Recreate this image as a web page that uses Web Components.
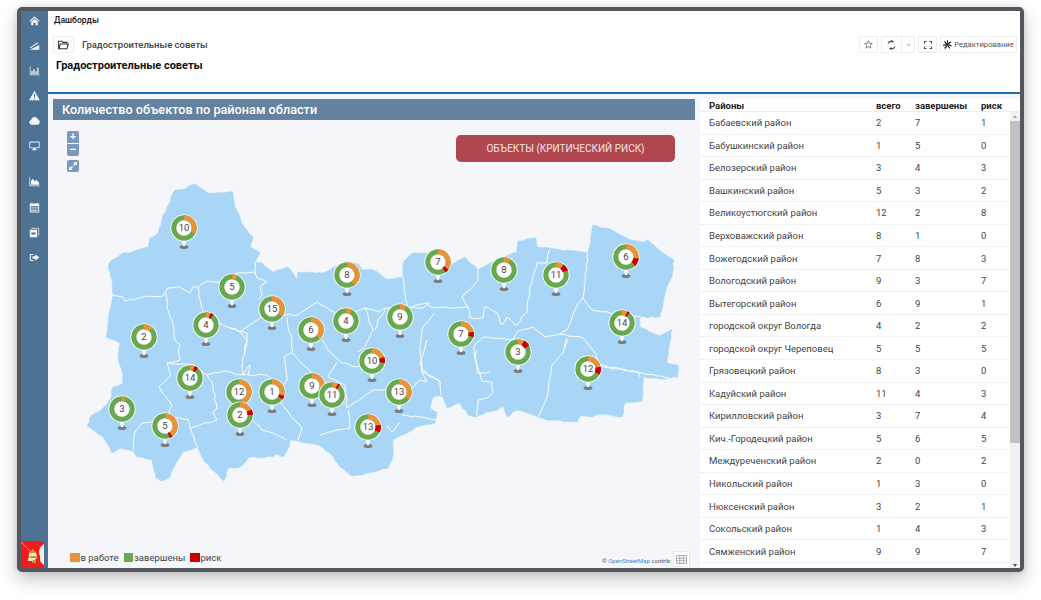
<!DOCTYPE html>
<html lang="ru">
<head>
<meta charset="utf-8">
<title>Дашборды</title>
<style>
  html, body { margin: 0; background: #fff; height: 100%; overflow: hidden; }
  body { font-family: Roboto, "Liberation Sans", sans-serif; }
</style>
</head>
<body>
<dash-app>
  <side-bar slot="side"></side-bar>
  <dash-header slot="head" crumb="Дашборды" name="Градостроительные советы"></dash-header>
  <map-panel slot="map" heading="Количество объектов по районам области"></map-panel>
  <district-table slot="table"></district-table>
</dash-app>

<script>
// Frame of the whole screenshot
class DashApp extends HTMLElement {
  constructor() {
    super();
    this.attachShadow( {mode: 'open'} ).innerHTML = `
      <style>
        :host {
          box-sizing: border-box;
          display: flex;
          width: 1007px;
          height: 565px;
          margin: 7px 0 0 17px;
          border: 4px solid #54585e;
          border-radius: 5px;
          overflow: hidden;
          background: #fff;
          box-shadow: 0 8px 18px rgba( 0, 0, 0, 0.22 ), 0 0 6px rgba( 0, 0, 0, 0.12 );
        }
        .main { flex: 1; display: flex; flex-direction: column; min-width: 0; }
        .content {
          flex: 1;
          display: flex;
          gap: 5px;
          padding: 5px 0 0 5px;
          background: #f4f6f9;
          min-height: 0;
        }
      </style>
      <slot name="side"></slot>
      <div class="main">
        <slot name="head"></slot>
        <div class="content">
          <slot name="map"></slot>
          <slot name="table"></slot>
        </div>
      </div>`;
  }
}

// 14x14 icons for the sidebar
const SIDE_ICONS = [
  '<path d="M7 1.5 13.5 7.5 12.4 8.6 7 3.6 1.6 8.6.5 7.5ZM2.8 8.6 7 4.8 11.2 8.6V13H8.4V9.8H5.6V13H2.8Z"/>',
  '<path d="M1 12.5 13 6.5V12.5ZM1 9.5 11 3 11.7 4 1.7 10.5Z"/>',
  '<path d="M1 1.5H1.9V12.1H13.5V13H1ZM3 7.5H4.6V11.4H3ZM5.5 5H7.1V11.4H5.5ZM8 8H9.6V11.4H8ZM10.5 3.5H12.1V11.4H10.5Z"/>',
  '<path fill-rule="evenodd" d="M7 .8 13.8 13H.2ZM6.2 4.8 6.4 9.6H7.6L7.8 4.8ZM6.2 10.4V11.9H7.8V10.4Z"/>',
  '<path d="M3.6 12.3C1.8 12.3.4 11 .4 9.3.4 7.8 1.5 6.7 2.8 6.4 3.1 4.2 5 2.6 7.2 2.6 9.2 2.6 10.8 3.9 11.3 5.7 12.8 6 13.7 7.4 13.7 8.9 13.7 10.8 12.3 12.3 10.4 12.3Z"/>',
  '<path fill-rule="evenodd" d="M.5 2H13.5V10.5H8.6V12H10.2V13H3.8V12H5.4V10.5H.5ZM1.6 3.1V9.4H12.4V3.1Z"/>',
  '',
  '<path d="M.5 1.5H1.5V12H13.5V13H.5ZM2.4 11V6.6L4.8 3.6 7.2 6.8 9.2 4.8 12.8 8.4V11Z"/>',
  '<path fill-rule="evenodd" d="M3 .8H4.4V2H9.6V.8H11V2H13V13.3H1V2H3ZM2.1 5V12.2H11.9V5ZM3 6H4.6V7.4H3ZM5.4 6H7V7.4H5.4ZM7.8 6H9.4V7.4H7.8ZM10.2 6H11.2V7.4H10.2ZM3 8.2H4.6V9.6H3ZM5.4 8.2H7V9.6H5.4ZM7.8 8.2H9.4V9.6H7.8ZM10.2 8.2H11.2V9.6H10.2ZM3 10.3H4.6V11.5H3ZM5.4 10.3H7V11.5H5.4ZM7.8 10.3H9.4V11.5H7.8Z"/>',
  '<path fill-rule="evenodd" d="M1 3.6H10.4V13H1ZM3 7V9.4H8.4V7Z"/><path d="M3.2 1H13V10.8H11.6V2.4H3.2Z" opacity=".6"/>',
  '<path d="M5.5 2.5H2.8C1.8 2.5 1 3.3 1 4.3V9.7C1 10.7 1.8 11.5 2.8 11.5H5.5V10.2H3.2C2.7 10.2 2.3 9.8 2.3 9.3V4.7C2.3 4.2 2.7 3.8 3.2 3.8H5.5ZM4.5 5.5H8V3L13.3 7 8 11V8.5H4.5Z"/>'
];

class SideBar extends HTMLElement {
  constructor() {
    super();
    const icons = SIDE_ICONS.map( ( d ) => {
      return d === '' ? '<i></i>' : `<svg viewBox="0 0 14 14">${d}</svg>`;
    } ).join( '' );

    this.attachShadow( {mode: 'open'} ).innerHTML = `
      <style>
        :host {
          box-sizing: border-box;
          display: flex;
          flex-direction: column;
          align-items: center;
          flex: 0 0 27px;
          background: #4e7294;
          padding-top: 3.5px;
        }
        svg {
          display: block;
          width: 11px;
          height: 11px;
          margin: 0 0 14.2px 0;
          fill: #f2f5f8;
          flex: none;
        }
        i { display: block; height: 10.8px; flex: none; }
        .crest { margin-top: auto; align-self: flex-start; width: 23px; height: 27px; flex: none; }
        .crest svg { width: 23px; height: 27px; margin: 0; }
      </style>
      ${icons}
      <div class="crest">
        <svg viewBox="0 0 23 27">
          <rect width="23" height="27" fill="#f01d1d"/>
          <path d="M23 3C18 6 17 11 19 15 20 18 17 20 23 24Z" fill="#f4f1e6"/>
          <path d="M0 1 11 12" stroke="#b9b4a4" stroke-width="1" fill="none"/>
          <path d="M8 13C8 9 14 9 15 12 17 15 16 19 13 19 10 20 7 18 8 13Z" fill="#f1e9cf"/>
          <path d="M10.5 8H12.5V10H14V12H9V10H10.5ZM9 15H16V17H9ZM11 19H15V22H11Z" fill="#c29a2b"/>
          <path d="M7 17H12V20H7Z" fill="#e9e3cc"/>
        </svg>
      </div>`;
  }
}

// Breadcrumb, toolbar and the title of the dashboard
class DashHeader extends HTMLElement {
  constructor() {
    super();
    const crumb = this.getAttribute( 'crumb' );
    const name = this.getAttribute( 'name' );

    this.attachShadow( {mode: 'open'} ).innerHTML = `
      <style>
        :host {
          box-sizing: border-box;
          display: block;
          flex: none;
          height: 83px;
          background: #fff;
          border-bottom: 2px solid #1b70b0;
          padding: 3.5px 3px 0 5px;
          font-family: Roboto, "Liberation Sans", sans-serif;
        }
        .crumb { font-size: 8.6px; font-weight: 500; line-height: 11px; color: #111; padding-left: 1px; }
        .bar { display: flex; align-items: center; height: 17px; margin-top: 10.5px; }
        .btn {
          box-sizing: border-box;
          display: flex;
          align-items: center;
          justify-content: center;
          height: 17px;
          border: 1px solid #eceef0;
          background: #fff;
          color: #444;
        }
        .folder { width: 21px; margin-right: 8px; }
        .name { font-size: 9.5px; font-weight: 500; color: #444; flex: 1; }
        .tools { display: flex; align-items: center; }
        svg { display: block; }
        .title { font-size: 11px; font-weight: 700; color: #111; margin: 6px 0 0 3px; line-height: 14px; }
        .edit { width: 77px; margin-left: 3px; font-size: 7.6px; color: #555; gap: 2px; white-space: nowrap; }
      </style>
      <div class="crumb">${crumb}</div>
      <div class="bar">
        <div class="btn folder">
          <svg width="11" height="10" viewBox="0 0 11 10" fill="none" stroke="#333" stroke-width="1.1">
            <path d="M.6 8.8V1.2H4L5 2.4H9V3.6"/><path d="M.8 8.8 2.4 4H10.4L8.8 8.8Z"/>
          </svg>
        </div>
        <div class="name">${name}</div>
        <div class="tools">
          <div class="btn" style="width:19px">
            <svg width="9" height="9" viewBox="0 0 10 10" fill="none" stroke="#666" stroke-width=".9">
              <path d="M5 .8 6.3 3.6 9.3 3.9 7 6 7.7 9 5 7.4 2.3 9 3 6 .7 3.9 3.7 3.6Z"/>
            </svg>
          </div>
          <div class="btn" style="width:21px;margin-left:3px">
            <svg width="9" height="10" viewBox="0 0 9 10" fill="none" stroke="#444" stroke-width="1.1">
              <path d="M1 3.4A3.8 3.8 0 0 1 5.6 1.4M8 6.6A3.8 3.8 0 0 1 3.4 8.6"/>
              <path d="M4.6 0V3L7 1.5ZM4.4 10V7L2 8.5Z" fill="#444" stroke="none"/>
            </svg>
          </div>
          <div class="btn" style="width:13px;border-left:0">
            <svg width="5" height="4" viewBox="0 0 7 5" fill="none" stroke="#777" stroke-width="1"><path d="M1 1 3.5 3.6 6 1"/></svg>
          </div>
          <div class="btn" style="width:19px;margin-left:3px">
            <svg width="8" height="8" viewBox="0 0 8 8" fill="#444">
              <path d="M0 0H2.4V1H1V2.4H0ZM5.6 0H8V2.4H7V1H5.6ZM8 5.6V8H5.6V7H7V5.6ZM2.4 8H0V5.6H1V7H2.4Z"/>
            </svg>
          </div>
          <div class="btn edit">
            <svg width="9" height="9" viewBox="0 0 10 10" fill="#333">
              <path d="M4.4 0H5.6V3.4L8.4 1.4 9.4 2.6 6.6 4.6 9.8 5.8 9.2 7.2 6 6 8 8.8 6.8 9.7 5 6.8 2.6 10 1.2 9 3.6 6 .2 6.6 0 5.2 3.2 4.4 1 2 2 1 4.4 3.4Z"/>
            </svg>
            <span>Редактирование</span>
          </div>
        </div>
      </div>
      <div class="title">${name}</div>`;
  }
}

// One donut on the map: n = number, o = share of orange, r = share of red
class MapPin extends HTMLElement {
  constructor() {
    super();
    const o = parseFloat( this.getAttribute( 'o' ) );
    const r = parseFloat( this.getAttribute( 'r' ) || 0 );
    const n = this.getAttribute( 'n' );
    const red = r > 0
      ? `<circle cx="15" cy="15" r="10.2" stroke="#cc0000" stroke-width="5.6" pathLength="100" stroke-dasharray="${r} ${100 - r}" stroke-dashoffset="${-o}" transform="rotate(-90 15 15)"/>`
      : '';

    this.attachShadow( {mode: 'open'} ).innerHTML = `
      <style>
        :host {
          display: block;
          position: absolute;
          width: 30px;
          height: 38px;
          margin: -15px 0 0 -15px;
          font-family: Roboto, "Liberation Sans", sans-serif;
        }
        svg { position: absolute; left: 0; top: 0; }
        span {
          position: absolute;
          left: 0;
          top: 0;
          width: 30px;
          line-height: 30px;
          text-align: center;
          font-size: 9.5px;
          color: #444;
        }
      </style>
      <svg width="30" height="38" viewBox="0 0 30 38" fill="none">
        <ellipse cx="15" cy="34" rx="4.4" ry="2" fill="#7d7d7d"/>
        <path d="M12.8 27H17.2L16 33H14Z" fill="#fff"/>
        <circle cx="15" cy="15" r="13.6" fill="#fff"/>
        <circle cx="15" cy="15" r="10.2" stroke="#6aa84f" stroke-width="5"/>
        <circle cx="15" cy="15" r="10.2" stroke="#e8923a" stroke-width="5" pathLength="100" stroke-dasharray="${o} ${100 - o}" transform="rotate(-90 15 15)"/>
        ${red}
      </svg>
      <span>${n}</span>`;
  }
}

// Region, in the coordinates of the page
const OUTLINE = '195,184 185,189 175,190 171,197 170,202 163,215 161,225 158,233 150,238 148,247 137,250 130,253 123,253 112,260 108,267 112,280 113,295 110,310 106,337 120,343 118,357 123,375 123,383 113,387 110,400 100,411 92,415 87,426 103,437 112,453 120,448 133,451 137,457 152,460 156,478 162,481 170,477 175,465 183,452 190,450 197,447 205,462 215,472 224,481 228,468 240,467 250,457 273,457 276,454 283,457 289,447 290,440 305,443 318,445 330,453 340,467 352,476 362,475 373,472 388,468 393,455 393,440 402,435 420,426 435,423 437,412 430,408 433,397 442,396 447,408 460,403 468,415 475,417 487,412 497,410 503,406 507,417 517,410 527,413 538,417 547,420 577,422 580,416 592,417 603,414 622,417 625,403 642,401 643,377 660,379 678,377 678,365 667,363 672,329 660,336 647,330 640,327 640,317 660,317 667,287 672,277 674,260 662,252 648,240 640,242 630,240 612,230 593,225 588,253 537,247 536,238 518,241 517,252 503,258 490,263 478,270 465,257 450,265 444,253 425,253 413,253 403,263 403,277 387,279 373,270 363,270 358,264 345,262 330,270 323,273 298,272 297,280 288,267 273,272 262,263 255,262 260,253 250,247 253,237 243,225 235,207 233,192 208,193';

const BORDERS = [
  '112,295 123,297 125,301 143,297 163,296 168,288 180,287 190,293 193,287 198,287 207,281 220,282 237,273 255,272 255,262',
  '255,272 257,278 267,282 260,287 262,295 258,300',
  '166,293 167,308 172,320 175,340 180,345 178,350 180,360 167,363 171,375 159,387 172,405 169,412 172,418 160,420 142,423 135,432 133,450',
  '198,287 199,297 203,312 220,323 240,332 247,340 245,350 242,367 243,375',
  '240,332 257,320 266,312 285,315 298,315 317,302 330,310 338,315 352,312 365,308 378,312 387,308 417,308 423,308 430,303',
  '287,317 288,327 292,337 292,353 284,357 287,380 280,390 280,402 290,415 297,422 302,428 298,440',
  '167,363 193,365 207,375 223,371 243,375 267,375 277,385',
  '207,375 212,382 217,408 213,412 217,420 190,428 198,447',
  '172,418 188,419 190,428',
  '243,375 250,365 248,375',
  '253,420 262,430 273,433 287,440',
  '293,353 307,368 315,376',
  '322,340 328,350 342,363 357,367 374,362',
  '328,377 337,362',
  '347,408 373,390 387,390 410,390 420,380 427,382 422,372 420,363 427,340',
  '320,435 337,430 350,428 348,410',
  '402,415 437,420',
  '387,425 392,432 400,423',
  '422,372 440,381 441,395',
  '477,350 475,358 482,381 492,382 493,393 487,398 478,400 477,416',
  '568,340 563,353 552,365 547,397 538,417',
  '603,367 638,372 640,377',
  '560,334 583,338 593,350 600,365 640,373 670,378',
  '560,334 545,337 533,327 517,332 513,340',
  '517,325 527,312 530,287 537,263 547,263 549,250',
  '588,253 583,297 577,305 567,330 560,334',
  '583,298 592,310 610,313 640,317',
  '567,338 563,353',
  '403,277 407,308 427,303 430,307 453,308 468,307 470,318 483,318 485,307 497,313 502,325 507,317 515,325 517,325',
  '468,307 462,297 478,280 478,270',
  '435,313 423,327 420,350 422,370 440,382',
  '512,340 483,337 474,347 477,373 490,372',
  '230,328 247,333 245,353',
  '365,308 373,330 365,347 358,352',
  '385,310 378,320 375,330',
  '328,377 345,385 347,408'
];

// Breaks long segments so the borders wobble like the real ones
let seed = 7;

function wobble( points, amount ) {
  const list = points.split( ' ' ).map( ( p ) => p.split( ',' ).map( Number ) );
  const out = [];

  list.forEach( ( p, i ) => {
    out.push( p );
    const next = list[i + 1];

    if( !next ) {
      return;
    }

    const steps = Math.floor( Math.hypot( next[0] - p[0], next[1] - p[1] ) / 4 );

    for( let s = 1; s < steps; s++ ) {
      seed = ( seed * 16807 ) % 2147483647;
      const dx = ( seed % 100 ) / 100 - 0.5;
      const dy = ( ( seed >> 8 ) % 100 ) / 100 - 0.5;
      out.push( [
        p[0] + ( next[0] - p[0] ) * s / steps + dx * amount,
        p[1] + ( next[1] - p[1] ) * s / steps + dy * amount
      ] );
    }
  } );

  return out.map( ( p ) => `${p[0].toFixed( 1 )},${p[1].toFixed( 1 )}` ).join( ' ' );
}

const PINS = [
  [184, 228, 10, 33, 0], [232, 287, 5, 7, 0], [272, 309, 15, 35, 0], [347, 275, 8, 40, 0],
  [206, 325, 4, 6, 4], [144, 337, 2, 12, 0], [311, 330, 6, 38, 0], [346, 321, 4, 8, 0],
  [190, 378, 14, 6, 5], [239, 392, 12, 45, 0], [272, 392, 1, 30, 5], [122, 409, 3, 4, 0],
  [165, 426, 5, 40, 4], [312, 386, 9, 30, 0], [240, 415, 2, 18, 7], [332, 395, 11, 8, 3],
  [372, 361, 10, 20, 8], [399, 392, 13, 35, 0], [368, 427, 13, 22, 10], [400, 317, 9, 9, 0],
  [438, 262, 7, 35, 5], [504, 270, 8, 9, 0], [556, 275, 11, 10, 9], [626, 257, 6, 27, 10],
  [461, 334, 7, 22, 7], [518, 352, 3, 8, 9], [622, 323, 14, 7, 3], [588, 369, 12, 22, 10]
];

class MapPanel extends HTMLElement {
  constructor() {
    super();
    const heading = this.getAttribute( 'heading' );
    const borders = BORDERS.map( ( b ) => `<polyline points="${wobble( b, 1.4 )}"/>` ).join( '' );
    const pins = PINS.map( ( p ) => {
      return `<map-pin n="${p[2]}" o="${p[3]}" r="${p[4]}" style="left:${p[0] - 53}px;top:${p[1] - 120}px"></map-pin>`;
    } ).join( '' );

    this.attachShadow( {mode: 'open'} ).innerHTML = `
      <style>
        :host {
          display: flex;
          flex-direction: column;
          flex: 0 0 642px;
          font-family: Roboto, "Liberation Sans", sans-serif;
        }
        .head {
          flex: none;
          height: 21px;
          line-height: 21px;
          background: #64829f;
          color: #fff;
          font-size: 12.7px;
          font-weight: 500;
          padding-left: 9px;
        }
        .canvas { flex: 1; position: relative; overflow: hidden; background: #f4f6f9; }
        .land { position: absolute; left: 0; top: 0; }
        .ctl {
          position: absolute;
          left: 14px;
          width: 12px;
          height: 12px;
          background: #7c99bd;
          border-radius: 2px;
          color: #fff;
          font: 700 11px/11px "Liberation Sans", sans-serif;
          text-align: center;
        }
        .ctl svg { display: block; margin: 2px; }
        .risk {
          position: absolute;
          left: 403px;
          top: 15px;
          width: 219px;
          height: 27px;
          line-height: 27px;
          border-radius: 5px;
          background: #b0474f;
          color: #f6e6e6;
          font-size: 10px;
          text-align: center;
        }
        .legend {
          position: absolute;
          left: 17px;
          bottom: 5px;
          display: flex;
          align-items: center;
          font-size: 9.5px;
          line-height: 11px;
          color: #444;
          white-space: nowrap;
        }
        .legend b { flex: none; width: 9.5px; height: 9.5px; margin: 0 1px 0 0; display: block; }
        .legend span { flex: none; margin-right: .5px; }
        .attr {
          position: absolute;
          left: 549px;
          bottom: 3px;
          white-space: nowrap;
          font-size: 6px;
          line-height: 9px;
          color: #555;
        }
        .attr a { color: #3d8fd6; }
        .grid {
          box-sizing: border-box;
          position: absolute;
          left: 620px;
          bottom: 1px;
          width: 17px;
          height: 16px;
          background: #fff;
          border: 1px solid #e6e8ea;
          display: flex;
          align-items: center;
          justify-content: center;
        }
      </style>
      <div class="head">${heading}</div>
      <div class="canvas">
        <svg class="land" width="642" height="448" viewBox="53 120 642 448">
          <polygon points="${wobble( OUTLINE, 1.6 )}" fill="#a9d6f7" stroke="#a9d6f7" stroke-width=".6" stroke-linejoin="round"/>
          <g fill="none" stroke="#fff" stroke-width="1" stroke-linejoin="round">${borders}</g>
        </svg>
        ${pins}
        <div class="ctl" style="top:11px;border-radius:2px 2px 0 0">+</div>
        <div class="ctl" style="top:23.5px;border-radius:0 0 2px 2px">−</div>
        <div class="ctl" style="top:40px">
          <svg width="8" height="8" viewBox="0 0 8 8" fill="#fff"><path d="M4.6 0H8V3.4L6.8 2.2 5 4 4 3 5.8 1.2ZM0 4.6 1.2 5.8 3 4 4 5 2.2 6.8 3.4 8H0Z"/></svg>
        </div>
        <div class="risk">ОБЪЕКТЫ (КРИТИЧЕСКИЙ РИСК)</div>
        <div class="legend">
          <b style="background:#e8923a"></b><span style="width:42.5px">в работе</span>
          <b style="background:#6aa84f"></b><span style="width:55.5px">завершены</span>
          <b style="background:#cc0000"></b><span>риск</span>
        </div>
        <div class="attr">© <a>OpenStreetMap</a> contrib</div>
        <div class="grid">
          <svg width="11" height="9" viewBox="0 0 11 9" fill="none" stroke="#999" stroke-width=".8">
            <path d="M.5.5H10.5V8.5H.5ZM.5 3.2H10.5M.5 5.8H10.5M3.8.5V8.5M7.2.5V8.5"/>
          </svg>
        </div>
      </div>`;
  }
}

const DISTRICTS = [
  ['Бабаевский район', 2, 7, 1], ['Бабушкинский район', 1, 5, 0], ['Белозерский район', 3, 4, 3],
  ['Вашкинский район', 5, 3, 2], ['Великоустюгский район', 12, 2, 8], ['Верховажский район', 8, 1, 0],
  ['Вожегодский район', 7, 8, 3], ['Вологодский район', 9, 3, 7], ['Вытегорский район', 6, 9, 1],
  ['городской округ Вологда', 4, 2, 2], ['городской округ Череповец', 5, 5, 5], ['Грязовецкий район', 8, 3, 0],
  ['Кадуйский район', 11, 4, 3], ['Кирилловский район', 3, 7, 4], ['Кич.-Городецкий район', 5, 6, 5],
  ['Междуреченский район', 2, 0, 2], ['Никольский район', 1, 3, 0], ['Нюксенский район', 3, 2, 1],
  ['Сокольский район', 1, 4, 3], ['Сямженский район', 9, 9, 7]
];

class DistrictTable extends HTMLElement {
  constructor() {
    super();
    const rows = DISTRICTS.map( ( d ) => {
      return `<div class="row"><span>${d[0]}</span><span>${d[1]}</span><span>${d[2]}</span><span>${d[3]}</span></div>`;
    } ).join( '' );

    this.attachShadow( {mode: 'open'} ).innerHTML = `
      <style>
        :host {
          display: flex;
          flex-direction: column;
          flex: 1;
          min-width: 0;
          background: #fff;
          font-family: Roboto, "Liberation Sans", sans-serif;
          color: #444;
        }
        .row, .top {
          display: grid;
          grid-template-columns: 167px 39px 66px 1fr;
          padding-left: 9px;
          align-items: center;
        }
        .top {
          flex: none;
          height: 12px;
          font-size: 9.5px;
          font-weight: 700;
          color: #222;
          border-bottom: 1px solid #eceef0;
        }
        .body { flex: 1; display: flex; min-height: 0; }
        .list { flex: 1; min-width: 0; }
        .row {
          box-sizing: border-box;
          height: 22.55px;
          font-size: 9.5px;
          border-bottom: 1px solid #f0f1f3;
        }
        .scroll {
          flex: 0 0 10px;
          display: flex;
          flex-direction: column;
          align-items: center;
          background: #f1f1f1;
        }
        .arrow { flex: none; width: 0; height: 0; border: 2px solid transparent; margin: 3px 0 0 0; border-bottom: 3px solid #a8a8a8; border-top: 0; }
        .thumb { flex: none; width: 100%; height: 322px; background: #c1c1c1; margin-top: 3px; }
        .down { margin: auto 0 1px 0; border-bottom: 0; border-top: 3px solid #505050; }
      </style>
      <div class="top"><span>Районы</span><span>всего</span><span>завершены</span><span>риск</span></div>
      <div class="body">
        <div class="list">${rows}</div>
        <div class="scroll">
          <div class="arrow"></div>
          <div class="thumb"></div>
          <div class="arrow down"></div>
        </div>
      </div>`;
  }
}

window.customElements.define( 'map-pin', MapPin );
window.customElements.define( 'dash-app', DashApp );
window.customElements.define( 'side-bar', SideBar );
window.customElements.define( 'dash-header', DashHeader );
window.customElements.define( 'map-panel', MapPanel );
window.customElements.define( 'district-table', DistrictTable );
</script>
</body>
</html>
